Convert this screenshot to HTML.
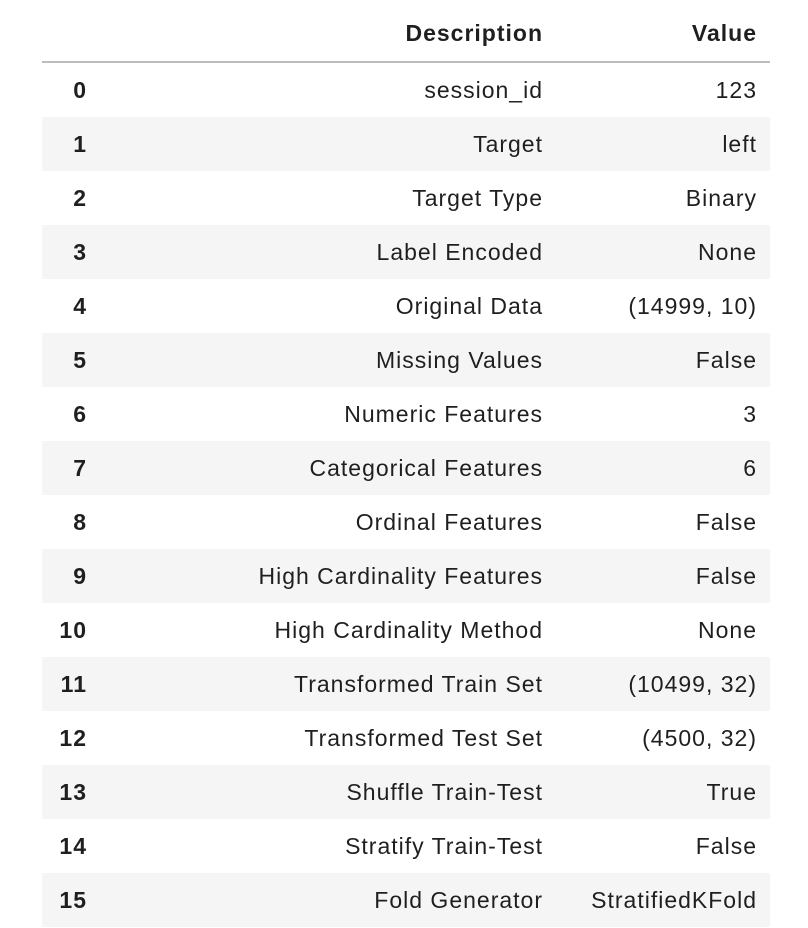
<!DOCTYPE html>
<html><head><style>
body{margin:0;background:#fff;width:808px;height:928px;overflow:hidden;font-family:"Liberation Sans",Arial,sans-serif;color:#1f1f1f;font-size:23px;letter-spacing:1px}
.r{position:absolute;left:42px;width:728px;height:54px}
.r.s{background:#f5f5f5}
.c{position:absolute;top:0;line-height:54px;white-space:nowrap}
.i{right:683px;font-weight:bold}
.d{right:227px}
.v{right:13px}
.h{position:absolute;left:42px;width:728px;top:0;height:61px;border-bottom:2px solid #bdbdbd}
.h .c{line-height:66px;font-weight:bold}
</style></head><body>
<div class="h"><span class="c d">Description</span><span class="c v">Value</span></div>
<div class="r" style="top:63px"><span class="c i">0</span><span class="c d">session_id</span><span class="c v">123</span></div>
<div class="r s" style="top:117px"><span class="c i">1</span><span class="c d">Target</span><span class="c v">left</span></div>
<div class="r" style="top:171px"><span class="c i">2</span><span class="c d">Target Type</span><span class="c v">Binary</span></div>
<div class="r s" style="top:225px"><span class="c i">3</span><span class="c d">Label Encoded</span><span class="c v">None</span></div>
<div class="r" style="top:279px"><span class="c i">4</span><span class="c d">Original Data</span><span class="c v">(14999, 10)</span></div>
<div class="r s" style="top:333px"><span class="c i">5</span><span class="c d">Missing Values</span><span class="c v">False</span></div>
<div class="r" style="top:387px"><span class="c i">6</span><span class="c d">Numeric Features</span><span class="c v">3</span></div>
<div class="r s" style="top:441px"><span class="c i">7</span><span class="c d">Categorical Features</span><span class="c v">6</span></div>
<div class="r" style="top:495px"><span class="c i">8</span><span class="c d">Ordinal Features</span><span class="c v">False</span></div>
<div class="r s" style="top:549px"><span class="c i">9</span><span class="c d">High Cardinality Features</span><span class="c v">False</span></div>
<div class="r" style="top:603px"><span class="c i">10</span><span class="c d">High Cardinality Method</span><span class="c v">None</span></div>
<div class="r s" style="top:657px"><span class="c i">11</span><span class="c d">Transformed Train Set</span><span class="c v">(10499, 32)</span></div>
<div class="r" style="top:711px"><span class="c i">12</span><span class="c d">Transformed Test Set</span><span class="c v">(4500, 32)</span></div>
<div class="r s" style="top:765px"><span class="c i">13</span><span class="c d">Shuffle Train-Test</span><span class="c v">True</span></div>
<div class="r" style="top:819px"><span class="c i">14</span><span class="c d">Stratify Train-Test</span><span class="c v">False</span></div>
<div class="r s" style="top:873px"><span class="c i">15</span><span class="c d">Fold Generator</span><span class="c v">StratifiedKFold</span></div>
</body></html>
